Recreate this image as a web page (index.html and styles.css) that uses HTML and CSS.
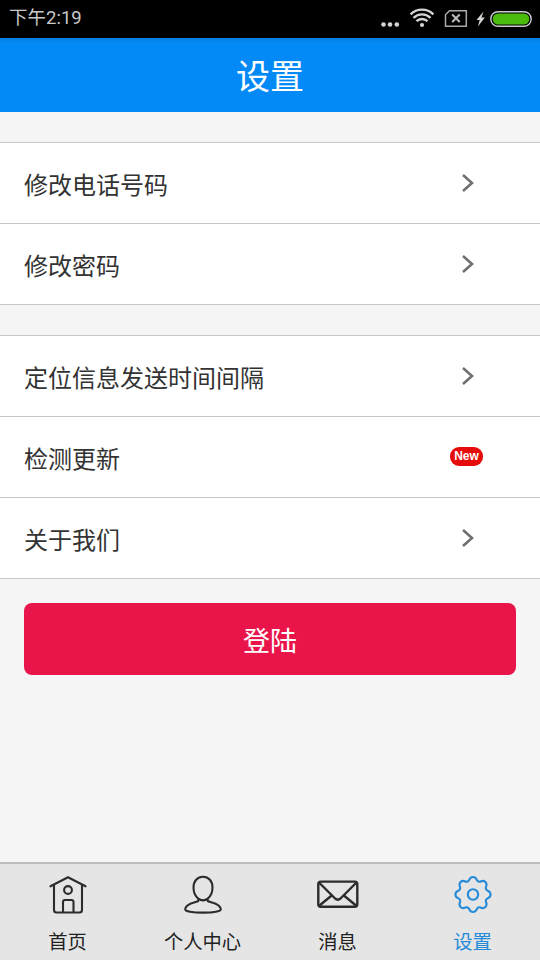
FILE: index.html
```html
<!DOCTYPE html>
<html lang="zh-CN">
<head>
<meta charset="utf-8">
<title>设置</title>
<link rel="stylesheet" href="styles.css">
</head>
<body>
<div class="status">
  <span class="time">下午2:19</span>
  <svg class="status-icons" viewBox="0 0 160 37">
    <g fill="#d4d4d4">
      <circle cx="3.500" cy="24.500" r="2.300"/><circle cx="10" cy="24.500" r="2.300"/><circle cx="16.800" cy="24.500" r="2.300"/>
      <circle cx="42" cy="25" r="2.100"/>
      <path d="M103.500 11.500l-7 8.500h3.200l-1.800 6.500 7-9h-3.400z"/>
    </g>
    <g fill="none" stroke="#d4d4d4" stroke-width="2.400">
      <path d="M36.500 21.200a7.800 7.800 0 0 1 11 0M33.500 17.800a12.200 12.200 0 0 1 17 0M30.600 14.300a16.300 16.300 0 0 1 22.800 0"/>
      <path stroke="#aaa" stroke-width="1.500" d="M69.500 10.700H86.300V26.300H65.500V14.700z"/>
      <path stroke="#bbb" stroke-width="2" d="M72.200 14.500l7.500 7.500M79.700 14.500l-7.500 7.500"/>
      <rect x="110.800" y="11.700" width="40.400" height="14.600" rx="7.300" stroke="#ccc" stroke-width="1.400"/>
    </g>
    <rect x="112.700" y="13.500" width="36.600" height="11" rx="5.500" fill="#4abb0c"/>
  </svg>
</div>
<header class="header">设置</header>
<main class="main">
  <section class="group">
    <div class="row"><span>修改电话号码</span><svg class="chevron" viewBox="0 0 14 20"><path d="M2 2l9 8-9 8"/></svg></div>
    <div class="row"><span>修改密码</span><svg class="chevron" viewBox="0 0 14 20"><path d="M2 2l9 8-9 8"/></svg></div>
  </section>
  <section class="group">
    <div class="row"><span>定位信息发送时间间隔</span><svg class="chevron" viewBox="0 0 14 20"><path d="M2 2l9 8-9 8"/></svg></div>
    <div class="row"><span>检测更新</span><b class="badge">New</b></div>
    <div class="row"><span>关于我们</span><svg class="chevron" viewBox="0 0 14 20"><path d="M2 2l9 8-9 8"/></svg></div>
  </section>
  <button class="login">登陆</button>
</main>
<nav class="tabs">
  <div class="tab">
    <svg viewBox="0 0 44 44"><path d="M4.500 14.300L22 5.300l17.500 9M8 12.700V38q0 2.500 2.500 2.500h23q2.500 0 2.500-2.500V12.700M17 40V30q0-2 2-2h6.500q2 0 2 2v10"/><circle cx="22" cy="18" r="3.900"/></svg>
    <span>首页</span>
  </div>
  <div class="tab">
    <svg viewBox="0 0 44 44"><path d="M22 4.800c5.700 0 9.500 4.400 9.500 10.800 0 5-2.100 9-4.800 11.100v2.300c1.400 1.600 13.100 2 13.100 8.500 0 1.800-7 3.100-17.800 3.100S4.200 39.300 4.200 37.500c0-6.500 11.700-6.900 13.100-8.500v-2.300c-2.700-2.100-4.800-6.100-4.800-11.100C12.500 9.200 16.300 4.800 22 4.800zM17.300 26.700q4.700 3.400 9.400 0"/></svg>
    <span>个人中心</span>
  </div>
  <div class="tab">
    <svg viewBox="0 0 44 44"><g stroke-width="2.400"><rect x="2.300" y="9.600" width="39" height="25.200" rx="2.500"/><path d="M3.500 11l15.600 15.500q2.700 2.300 5.400 0L40 11M3.500 33.500L16 23.300M40 33.500L27.600 23.300"/></g></svg>
    <span>消息</span>
  </div>
  <div class="tab active">
    <svg viewBox="-22 -22 44 44"><circle cx="0" cy=".5" r="5.200"/><path transform="translate(0 .5)" d="M15.200-3.510A3.800 3.800 0 0 1 15.200 3.510A3.200 3.200 0 0 0 13.230 8.270A3.800 3.800 0 0 1 8.270 13.230A3.200 3.200 0 0 0 3.510 15.200A3.800 3.800 0 0 1-3.510 15.200A3.200 3.200 0 0 0-8.270 13.230A3.800 3.800 0 0 1-13.230 8.270A3.200 3.200 0 0 0-15.200 3.510A3.800 3.800 0 0 1-15.200-3.510A3.200 3.200 0 0 0-13.230-8.270A3.800 3.800 0 0 1-8.270-13.230A3.200 3.200 0 0 0-3.510-15.200A3.800 3.800 0 0 1 3.510-15.200A3.200 3.200 0 0 0 8.270-13.230A3.800 3.800 0 0 1 13.230-8.270A3.200 3.200 0 0 0 15.200-3.510z"/></svg>
    <span>设置</span>
  </div>
</nav>
</body>
</html>
```
FILE: styles.css
```css
* { box-sizing: border-box; }
body {
  margin: 0;
  width: 540px;
  height: 960px;
  display: flex;
  flex-direction: column;
  overflow: hidden;
  background: #f5f5f5;
  color: #333;
  font-family: "Noto Sans CJK SC", sans-serif;
}
.status {
  height: 38px;
  display: flex;
  justify-content: space-between;
  background: #000;
  color: #c8c8c8;
}
.time {
  padding-left: 9px;
  font: 18.5px/37px Roboto, "Noto Sans CJK SC", sans-serif;
}
.status-icons { width: 160px; height: 37px; }
.header {
  height: 74px;
  background: linear-gradient(#087fe4, #048af7 5px);
  color: #fff;
  font-size: 34px;
  line-height: 74px;
  text-align: center;
}
.main { flex: 1; padding-top: 30px; }
.group {
  margin-bottom: 30px;
  border-top: 1px solid #c8c8c8;
  background: #fff;
}
.row {
  height: 81px;
  display: flex;
  align-items: center;
  justify-content: space-between;
  padding: 0 57px 0 24px;
  border-bottom: 1px solid #c8c8c8;
  font-size: 24px;
  line-height: 36px;
}
.row span { padding-top: 1px; }
.chevron {
  width: 14px;
  height: 20px;
  margin-right: 8px;
  fill: none;
  stroke: #707070;
  stroke-width: 2.6;
}
.badge {
  width: 33px;
  height: 19px;
  margin-bottom: 1px;
  border-radius: 9px;
  background: #e60c0c;
  color: #fff;
  font: bold 12px/19px "Liberation Sans", sans-serif;
  text-align: center;
}
.login {
  display: block;
  width: 492px;
  height: 72px;
  margin: -6px auto 0;
  padding: 1px 0 0;
  border: 0;
  border-radius: 8px;
  background: #e9154a;
  color: #fff;
  font: 27px "Noto Sans CJK SC", sans-serif;
}
.tabs {
  height: 98px;
  display: grid;
  grid-template-columns: repeat(4, 1fr);
  border-top: 2px solid #bdbdbd;
  background: #e5e5e5;
  color: #222;
}
.tab {
  display: flex;
  flex-direction: column;
  align-items: center;
  padding-top: 8px;
  font-size: 19.3px;
  line-height: 28px;
}
.tab svg {
  width: 44px;
  height: 44px;
  margin-bottom: 11px;
  fill: none;
  stroke: #2c2c2c;
  stroke-width: 2.1;
  stroke-linejoin: round;
  stroke-linecap: round;
}
.tab.active { color: #258ad8; }
.tab.active svg { stroke: #258ad8; }
```
